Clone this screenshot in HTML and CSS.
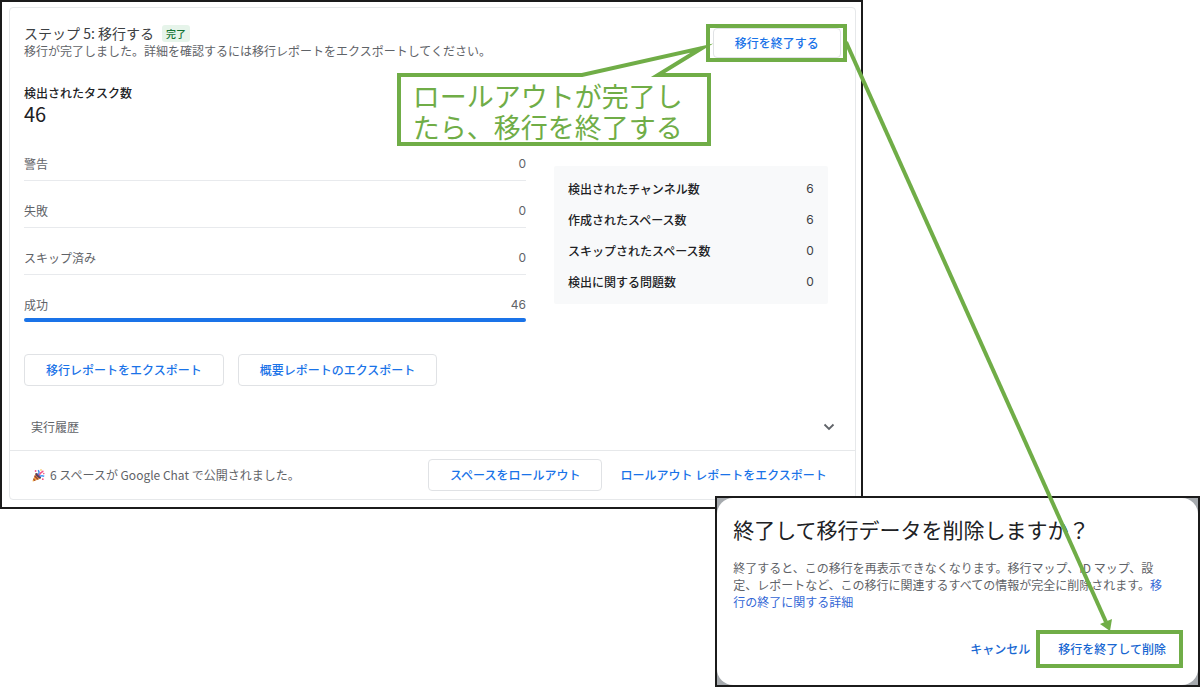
FILE: index.html
```html
<!DOCTYPE html>
<html lang="ja">
<head>
  <meta charset="UTF-8" />
  <meta name="viewport" content="width=device-width, initial-scale=1" />
  <title>移行の終了</title>
  <link rel="stylesheet" href="styles.css">
</head>
<body>

<div class="board">

  <section class="window">
    <div class="card">
      <div class="card-body">
        <header class="card-header">
          <div>
            <h1>ステップ 5: 移行する <span class="badge">完了</span></h1>
            <p>移行が完了しました。詳細を確認するには移行レポートをエクスポートしてください。</p>
          </div>
          <div class="highlight">
            <button class="btn btn-end">移行を終了する</button>
          </div>
        </header>

        <h2>検出されたタスク数</h2>
        <div class="total">46</div>

        <div class="stats">
          <dl class="tasks">
            <div><dt>警告</dt><dd>0</dd></div>
            <div><dt>失敗</dt><dd>0</dd></div>
            <div><dt>スキップ済み</dt><dd>0</dd></div>
            <div class="success"><dt>成功</dt><dd>46</dd></div>
          </dl>
          <dl class="summary">
            <div><dt>検出されたチャンネル数</dt><dd>6</dd></div>
            <div><dt>作成されたスペース数</dt><dd>6</dd></div>
            <div><dt>スキップされたスペース数</dt><dd>0</dd></div>
            <div><dt>検出に関する問題数</dt><dd>0</dd></div>
          </dl>
        </div>

        <div class="exports">
          <button class="btn">移行レポートをエクスポート</button>
          <button class="btn">概要レポートのエクスポート</button>
        </div>

        <button class="history">
          <span>実行履歴</span>
          <svg width="12" height="8" viewBox="0 0 12 8"><path d="M1.5 1.5 6 6l4.5-4.5" fill="none" stroke="#5f6368" stroke-width="1.8"/></svg>
        </button>
      </div>

      <footer class="card-footer">
        <svg class="party" width="13" height="13" viewBox="0 0 13 13">
          <path d="M3.6 4.2 8.8 9.4 1 12.4Q.4 12.4.6 11.8Z" fill="#f2a93b"/>
          <path d="M2.9 6 6.8 10.2 5.4 10.8 2.2 7.8ZM1.7 9.2 3.6 11.4 2.4 11.9 1.2 10.6Z" fill="#a0413c"/>
          <ellipse cx="6.2" cy="6.8" rx="1.5" ry="3.6" transform="rotate(-45 6.2 6.8)" fill="#5b3d5c"/>
          <path d="M6 6Q8 4 6.2 1.2" fill="none" stroke="#3f8df0" stroke-width="1.4"/>
          <path d="M7 6.4Q8.4 3.4 11.4 2" fill="none" stroke="#f2558a" stroke-width="1.4"/>
          <path d="M7.6 7.4Q10 6 12.2 7.4" fill="none" stroke="#4b9cf5" stroke-width="1.4"/>
          <circle cx="3.6" cy="2" r=".9" fill="#f2558a"/>
          <circle cx="9" cy="1" r=".8" fill="#f6b93b"/>
          <circle cx="11.8" cy="4.6" r=".8" fill="#f2558a"/>
          <circle cx="10.8" cy="10.2" r=".9" fill="#f2558a"/>
        </svg>
        <span class="published">6 スペースが Google Chat で公開されました。</span>
        <button class="btn">スペースをロールアウト</button>
        <button class="btn-text">ロールアウト レポートをエクスポート</button>
      </footer>
    </div>
  </section>

  <section class="dialog-frame">
    <div class="dialog" role="dialog" aria-labelledby="dialogTitle">
      <h2 id="dialogTitle">終了して移行データを削除しますか？</h2>
      <p>終了すると、この移行を再表示できなくなります。移行マップ、ID マップ、設定、レポートなど、この移行に関連するすべての情報が完全に削除されます。<a href="#">移行の終了に関する詳細</a></p>
      <div class="actions">
        <button class="btn-text">キャンセル</button>
        <div class="highlight">
          <button class="btn-text btn-delete">移行を終了して削除</button>
        </div>
      </div>
    </div>
  </section>

  <!-- 吹き出しと矢印 -->
  <svg class="notes" viewBox="0 0 1200 687" preserveAspectRatio="none">
    <path class="bubble" d="M399 75H582L702 48 658 75H709V144H399Z"/>
    <path class="arrow" d="M846 42 1106 622"/>
    <path class="arrow-head" d="M1100 624 1112 619 1110 631Z"/>
  </svg>
  <div class="note-text">ロールアウトが完了したら、移行を終了する</div>

</div>

</body>
</html>
```

FILE: styles.css
```css
* {
  box-sizing: border-box;
}
body {
  margin: 0;
  background: #fff;
  color: #5f6368;
  font-family: "Noto Sans CJK JP", "Noto Sans", sans-serif;
  font-size: 12px;
  line-height: 16px;
}
h1, h2, p, dl, dd {
  margin: 0;
}
button {
  font: inherit;
  background: none;
  border: none;
  padding: 0;
  cursor: pointer;
}
.board {
  position: relative;
}

/* 移行ステップ */
.window {
  width: 71.9%;
  border: 2px solid #1b1b1b;
  padding: 5px 5px 7px 7px;
}
.card {
  border: 1px solid #e6e8ea;
  border-radius: 4px;
}
.card-body {
  padding: 16px 8px 0 14px;
}
.card-header {
  display: flex;
  justify-content: space-between;
}
.card-header h1 {
  display: flex;
  align-items: center;
  gap: 8px;
  font-size: 14px;
  font-weight: 400;
  line-height: 18px;
  color: #3c4043;
}
.card-header p {
  line-height: 18px;
}
.badge {
  padding: 0 4px;
  border-radius: 3px;
  background: #e6f4ea;
  color: #137333;
  font-size: 10px;
  font-weight: 500;
  line-height: 17px;
}
.highlight {
  height: 38px;
  border: 4px solid #70ad47;
}
.btn {
  height: 32px;
  padding: 0 21px;
  border: 1px solid #e0e2e5;
  border-radius: 4px;
  color: #1a73e8;
  font-weight: 500;
  white-space: nowrap;
}
.btn-end {
  height: 30px;
  margin: 0 2px 0 3px;
}
.btn-text {
  color: #1a73e8;
  font-weight: 500;
  white-space: nowrap;
}
.card-body h2 {
  margin-top: 21px;
  font-size: 12px;
  font-weight: 500;
  line-height: 20px;
  color: #202124;
}
.total {
  font-size: 20px;
  line-height: 22px;
  color: #202124;
}
.stats {
  display: grid;
  grid-template-columns: 11fr 6fr;
  gap: 28px;
  align-items: start;
  margin: 9px 19px 0 0;
}
.tasks div,
.summary div {
  display: flex;
  justify-content: space-between;
}
.stats dd {
  font-family: Inter, sans-serif;
}
.tasks div {
  height: 47px;
  align-items: flex-end;
  padding-bottom: 8px;
  border-bottom: 1px solid #e8eaed;
}
.tasks .success {
  position: relative;
  padding-bottom: 9px;
  border-bottom: none;
}
.success::after {
  content: "";
  position: absolute;
  left: 0;
  right: 0;
  bottom: 0;
  height: 4px;
  border-radius: 2px;
  background: #1a73e8;
}
.summary {
  margin-top: 32px;
  padding: 7px 14px;
  border-radius: 2px;
  background: #f8f9fa;
}
.summary div {
  line-height: 31px;
}
.summary dt {
  color: #202124;
  font-weight: 500;
}
.summary dd {
  color: #3c4043;
}
.exports {
  display: flex;
  gap: 14px;
  margin-top: 32px;
}
.history {
  display: flex;
  justify-content: space-between;
  align-items: center;
  width: 100%;
  height: 64px;
  padding: 18px 12px 0 7px;
  color: #5f6368;
}
.card-footer {
  display: flex;
  align-items: center;
  height: 49px;
  padding: 0 28px 0 22px;
  border-top: 1px solid #e6e8ea;
}
.published {
  flex: 1;
  margin-left: 5px;
}
.card-footer .btn-text {
  margin-left: 18px;
}

/* 削除の確認 */
.dialog-frame {
  position: relative;
  width: 40.4%;
  margin: -13px 0 0 auto;
  border: 2px solid #1b1b1b;
  background: #a6aaae;
}
.dialog {
  padding: 16px 15px 17px 16px;
  border-radius: 16px;
  background: #fff;
}
.dialog h2 {
  font-size: 21px;
  font-weight: 400;
  line-height: 30px;
  color: #202124;
}
.dialog p {
  margin: 15px 13px 20px 0;
  line-height: 17px;
}
.dialog a {
  color: #3367d6;
  text-decoration: none;
}
.actions {
  display: flex;
  justify-content: flex-end;
  align-items: center;
  gap: 6px;
}
.actions .btn-text {
  color: #1967d2;
}
.actions .btn-delete {
  height: 30px;
  padding: 0 13px 0 18px;
}

/* 注釈 */
.notes {
  position: absolute;
  top: 0;
  left: 0;
  width: 100%;
  height: 100%;
  pointer-events: none;
}
.bubble {
  fill: #fff;
  stroke: #70ad47;
  stroke-width: 4;
  stroke-miterlimit: 20;
}
.arrow {
  stroke: #70ad47;
  stroke-width: 4;
}
.arrow-head {
  fill: #70ad47;
}
.note-text {
  position: absolute;
  top: 80px;
  left: 34.4%;
  width: 280px;
  color: #70ad47;
  font-size: 27px;
  font-weight: 400;
  line-height: 31px;
}
```
